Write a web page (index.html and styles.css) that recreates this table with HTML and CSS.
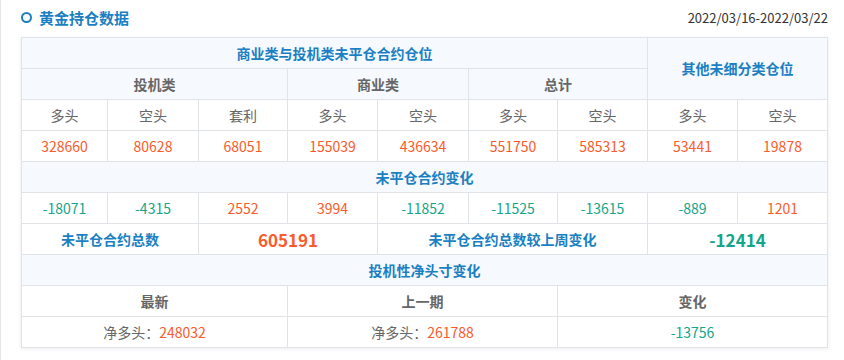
FILE: index.html
```html
<!DOCTYPE html>
<html lang="zh-CN">
<head>
<meta charset="utf-8">
<title>黄金持仓数据</title>
<link rel="stylesheet" href="styles.css">
</head>
<body>
<div class="page">
  <div class="head">
    <div class="title"><span class="ring"></span>黄金持仓数据</div>
    <div class="date">2022/03/16-2022/03/22</div>
  </div>
  <table class="grid">
    <colgroup>
      <col class="c1"><col class="c2"><col class="c3"><col class="c4"><col class="c5"><col class="c6"><col class="c7"><col class="c8"><col class="c9">
    </colgroup>
    <tr class="tint">
      <td colspan="7" class="blue">商业类与投机类未平仓合约仓位</td>
      <td colspan="2" rowspan="2" class="blue">其他未细分类仓位</td>
    </tr>
    <tr class="tint">
      <td colspan="3" class="sub">投机类</td>
      <td colspan="2" class="sub">商业类</td>
      <td colspan="2" class="sub">总计</td>
    </tr>
    <tr class="lbl">
      <td>多头</td><td>空头</td><td>套利</td><td>多头</td><td>空头</td><td>多头</td><td>空头</td><td>多头</td><td>空头</td>
    </tr>
    <tr class="num">
      <td class="up">328660</td><td class="up">80628</td><td class="up">68051</td><td class="up">155039</td><td class="up">436634</td><td class="up">551750</td><td class="up">585313</td><td class="up">53441</td><td class="up">19878</td>
    </tr>
    <tr class="tint">
      <td colspan="9" class="blue">未平仓合约变化</td>
    </tr>
    <tr class="num">
      <td class="down">-18071</td><td class="down">-4315</td><td class="up">2552</td><td class="up">3994</td><td class="down">-11852</td><td class="down">-11525</td><td class="down">-13615</td><td class="down">-889</td><td class="up">1201</td>
    </tr>
    <tr>
      <td colspan="2" class="blue">未平仓合约总数</td>
      <td colspan="2" class="big up">605191</td>
      <td colspan="3" class="blue">未平仓合约总数较上周变化</td>
      <td colspan="2" class="big down">-12414</td>
    </tr>
    <tr class="tint">
      <td colspan="9" class="blue">投机性净头寸变化</td>
    </tr>
    <tr>
      <td colspan="3" class="sub">最新</td>
      <td colspan="3" class="sub">上一期</td>
      <td colspan="3" class="sub">变化</td>
    </tr>
    <tr class="num">
      <td colspan="3"><span class="lab">净多头：</span><span class="up">248032</span></td>
      <td colspan="3"><span class="lab">净多头：</span><span class="up">261788</span></td>
      <td colspan="3" class="down">-13756</td>
    </tr>
  </table>
</div>
</body>
</html>
```

FILE: styles.css
```css
html, body {
  margin: 0;
  padding: 0;
  background: #ffffff;
}
body {
  font-family: "Noto Sans CJK SC", "Noto Sans", "Liberation Sans", sans-serif;
  color: #666666;
}
.page {
  border-left: 1px solid #e6e6e6;
  padding: 0 17px 0 20px;
  height: 360px;
  box-sizing: border-box;
}
.head {
  display: flex;
  align-items: center;
  justify-content: space-between;
  height: 34px;
  margin-bottom: 3px;
}
.title {
  display: flex;
  align-items: center;
  font-size: 15px;
  font-weight: bold;
  color: #1a7fc3;
}
.ring {
  width: 7px;
  height: 7px;
  border: 2px solid #1a7fc3;
  border-radius: 50%;
  margin-right: 7px;
}
.date {
  font-size: 13px;
  color: #333333;
  margin-right: -1px;
}
.grid {
  width: 806px;
  table-layout: fixed;
  border-collapse: collapse;
  box-shadow: 0 1px 4px rgba(0, 0, 0, 0.08);
}
.c1 { width: 86px; }
.c2 { width: 91px; }
.c3 { width: 89px; }
.c4 { width: 90px; }
.c5 { width: 91px; }
.c6 { width: 89px; }
.c7 { width: 90px; }
.c8 { width: 90px; }
.c9 { width: 90px; }
.grid td {
  border: 1px solid #e0e3e8;
  padding: 0;
  height: 30px;
  line-height: 29px;
  text-align: center;
  font-size: 14px;
  white-space: nowrap;
}
.tint td {
  background: #f6f9fd;
}
.blue {
  color: #1a7fc3;
  font-weight: bold;
}
.sub {
  color: #666666;
  font-weight: bold;
}
.lbl td {
  color: #666666;
}
.num td {
  font-size: 14px;
}
.up {
  color: #fb5a2a;
}
.down {
  color: #14a58a;
}
.big {
  font-size: 17px !important;
  font-weight: bold;
}
.lab {
  color: #666666;
}
```
